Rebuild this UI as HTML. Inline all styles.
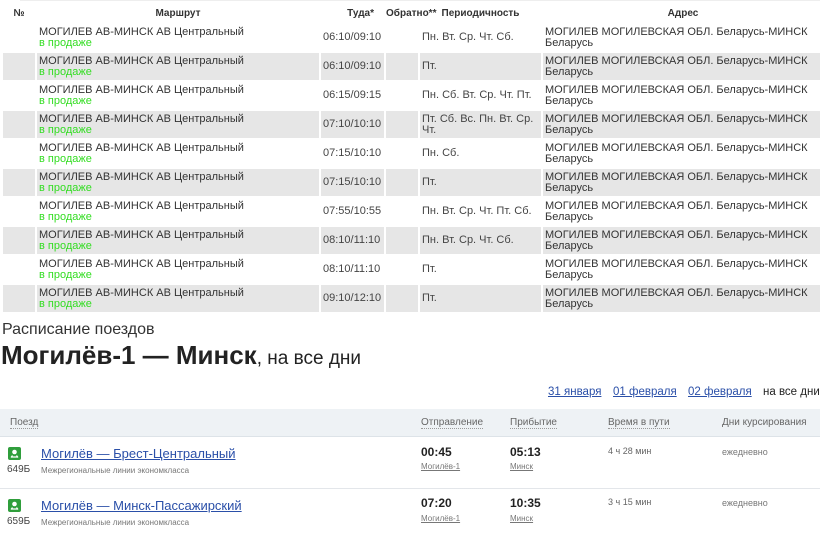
<!DOCTYPE html>
<html><head><meta charset="utf-8"><style>
*{margin:0;padding:0;box-sizing:border-box}
body{width:820px;height:537px;overflow:hidden;background:#fff;font-family:"Liberation Sans",Arial,sans-serif;position:relative}
.a{position:absolute}
table.t{position:absolute;left:1px;top:2px;border-collapse:separate;border-spacing:2px;font-size:11px;color:#444;width:820px;table-layout:fixed}
table.t th{font-size:10px;font-weight:bold;color:#333;height:18px;text-align:center;white-space:nowrap;overflow:visible}
table.t td{height:27px;vertical-align:middle;line-height:11px;padding-left:2px}
table.t tr.g td{background:#e6e6e6}
.g1{color:#33dd22}
.r{color:#333}
.lnk{color:#2a4fa8;text-decoration:underline}
.sm{font-size:11px;color:#666}
</style></head><body>
<div class="a" style="left:20px;top:0;width:800px;height:2px;border-top:1px solid #eee"></div>
<table class="t">
<colgroup><col style="width:32px"><col style="width:282px"><col style="width:63px"><col style="width:32px"><col style="width:121px"><col style="width:280px"></colgroup>
<tr><th>№</th><th>Маршрут</th><th style="text-align:right;padding-right:10px">Туда*</th><th>Обратно**</th><th>Периодичность</th><th>Адрес</th></tr>
<tr><td></td><td class="r">МОГИЛЕВ АВ-МИНСК АВ Центральный<br><span class="g1">в продаже</span></td><td>06:10/09:10</td><td></td><td>Пн. Вт. Ср. Чт. Сб.</td><td class="r">МОГИЛЕВ МОГИЛЕВСКАЯ ОБЛ. Беларусь-МИНСК Беларусь</td></tr>
<tr class="g"><td></td><td class="r">МОГИЛЕВ АВ-МИНСК АВ Центральный<br><span class="g1">в продаже</span></td><td>06:10/09:10</td><td></td><td>Пт.</td><td class="r">МОГИЛЕВ МОГИЛЕВСКАЯ ОБЛ. Беларусь-МИНСК Беларусь</td></tr>
<tr><td></td><td class="r">МОГИЛЕВ АВ-МИНСК АВ Центральный<br><span class="g1">в продаже</span></td><td>06:15/09:15</td><td></td><td>Пн. Сб. Вт. Ср. Чт. Пт.</td><td class="r">МОГИЛЕВ МОГИЛЕВСКАЯ ОБЛ. Беларусь-МИНСК Беларусь</td></tr>
<tr class="g"><td></td><td class="r">МОГИЛЕВ АВ-МИНСК АВ Центральный<br><span class="g1">в продаже</span></td><td>07:10/10:10</td><td></td><td>Пт. Сб. Вс. Пн. Вт. Ср. Чт.</td><td class="r">МОГИЛЕВ МОГИЛЕВСКАЯ ОБЛ. Беларусь-МИНСК Беларусь</td></tr>
<tr><td></td><td class="r">МОГИЛЕВ АВ-МИНСК АВ Центральный<br><span class="g1">в продаже</span></td><td>07:15/10:10</td><td></td><td>Пн. Сб.</td><td class="r">МОГИЛЕВ МОГИЛЕВСКАЯ ОБЛ. Беларусь-МИНСК Беларусь</td></tr>
<tr class="g"><td></td><td class="r">МОГИЛЕВ АВ-МИНСК АВ Центральный<br><span class="g1">в продаже</span></td><td>07:15/10:10</td><td></td><td>Пт.</td><td class="r">МОГИЛЕВ МОГИЛЕВСКАЯ ОБЛ. Беларусь-МИНСК Беларусь</td></tr>
<tr><td></td><td class="r">МОГИЛЕВ АВ-МИНСК АВ Центральный<br><span class="g1">в продаже</span></td><td>07:55/10:55</td><td></td><td>Пн. Вт. Ср. Чт. Пт. Сб.</td><td class="r">МОГИЛЕВ МОГИЛЕВСКАЯ ОБЛ. Беларусь-МИНСК Беларусь</td></tr>
<tr class="g"><td></td><td class="r">МОГИЛЕВ АВ-МИНСК АВ Центральный<br><span class="g1">в продаже</span></td><td>08:10/11:10</td><td></td><td>Пн. Вт. Ср. Чт. Сб.</td><td class="r">МОГИЛЕВ МОГИЛЕВСКАЯ ОБЛ. Беларусь-МИНСК Беларусь</td></tr>
<tr><td></td><td class="r">МОГИЛЕВ АВ-МИНСК АВ Центральный<br><span class="g1">в продаже</span></td><td>08:10/11:10</td><td></td><td>Пт.</td><td class="r">МОГИЛЕВ МОГИЛЕВСКАЯ ОБЛ. Беларусь-МИНСК Беларусь</td></tr>
<tr class="g"><td></td><td class="r">МОГИЛЕВ АВ-МИНСК АВ Центральный<br><span class="g1">в продаже</span></td><td>09:10/12:10</td><td></td><td>Пт.</td><td class="r">МОГИЛЕВ МОГИЛЕВСКАЯ ОБЛ. Беларусь-МИНСК Беларусь</td></tr>
</table>
<div class="a" style="left:2px;top:321px;font-size:16px;color:#333">Расписание поездов</div>
<div class="a" style="left:1px;top:340px;font-size:26px;color:#222;white-space:nowrap"><b>Могилёв-1 — Минск</b><span style="font-size:19px">, на все дни</span></div>
<div class="a lnk" style="left:548px;top:386px;font-size:11.5px">31 января</div>
<div class="a lnk" style="left:613px;top:386px;font-size:11.5px">01 февраля</div>
<div class="a lnk" style="left:688px;top:386px;font-size:11.5px">02 февраля</div>
<div class="a" style="left:763px;top:386px;font-size:11.5px;color:#222;white-space:nowrap">на все дни</div>
<div class="a" style="left:0;top:409px;width:820px;height:28px;background:#eef2f5;border-bottom:1px solid #dde3e8"></div>
<div class="a sm" style="left:10px;top:417px;font-size:10px;color:#666;border-bottom:1px dotted #999">Поезд</div>
<div class="a sm" style="left:421px;top:417px;font-size:10px;border-bottom:1px dotted #999">Отправление</div>
<div class="a sm" style="left:510px;top:417px;font-size:10px;border-bottom:1px dotted #999">Прибытие</div>
<div class="a sm" style="left:608px;top:417px;font-size:10px;border-bottom:1px dotted #999">Время в пути</div>
<div class="a sm" style="left:722px;top:417px;font-size:10px">Дни курсирования</div>
<div class="a" style="left:0;top:488px;width:820px;height:1px;background:#e3e6ea"></div>
<!-- row 1 -->
<svg class="a" style="left:8px;top:447px" width="13" height="13" viewBox="0 0 13 13"><rect width="13" height="13" rx="2" fill="#2f9e3c"/><circle cx="6.5" cy="5" r="2.3" fill="#fff"/><path d="M3 10h7M4.5 8.5l-1.5 2M8.5 8.5l1.5 2" stroke="#fff" stroke-width="1.2"/></svg>
<div class="a" style="left:7px;top:464px;font-size:10px;color:#444">649Б</div>
<div class="a" style="left:41px;top:446px;font-size:13px;color:#2a4fa8;text-decoration:underline">Могилёв — Брест-Центральный</div>
<div class="a" style="left:41px;top:466px;font-size:8px;color:#777">Межрегиональные линии экономкласса</div>
<div class="a" style="left:421px;top:445px;font-size:12px;font-weight:bold;color:#222">00:45</div>
<div class="a" style="left:421px;top:462px;font-size:8px;color:#777;text-decoration:underline">Могилёв-1</div>
<div class="a" style="left:510px;top:445px;font-size:12px;font-weight:bold;color:#222">05:13</div>
<div class="a" style="left:510px;top:462px;font-size:8px;color:#777;text-decoration:underline">Минск</div>
<div class="a" style="left:608px;top:446px;font-size:9px;color:#666">4 ч 28 мин</div>
<div class="a" style="left:722px;top:447px;font-size:9px;color:#777">ежедневно</div>
<!-- row 2 -->
<svg class="a" style="left:8px;top:499px" width="13" height="13" viewBox="0 0 13 13"><rect width="13" height="13" rx="2" fill="#2f9e3c"/><circle cx="6.5" cy="5" r="2.3" fill="#fff"/><path d="M3 10h7M4.5 8.5l-1.5 2M8.5 8.5l1.5 2" stroke="#fff" stroke-width="1.2"/></svg>
<div class="a" style="left:7px;top:516px;font-size:10px;color:#444">659Б</div>
<div class="a" style="left:41px;top:498px;font-size:13px;color:#2a4fa8;text-decoration:underline">Могилёв — Минск-Пассажирский</div>
<div class="a" style="left:41px;top:518px;font-size:8px;color:#777">Межрегиональные линии экономкласса</div>
<div class="a" style="left:421px;top:496px;font-size:12px;font-weight:bold;color:#222">07:20</div>
<div class="a" style="left:421px;top:514px;font-size:8px;color:#777;text-decoration:underline">Могилёв-1</div>
<div class="a" style="left:510px;top:496px;font-size:12px;font-weight:bold;color:#222">10:35</div>
<div class="a" style="left:510px;top:514px;font-size:8px;color:#777;text-decoration:underline">Минск</div>
<div class="a" style="left:608px;top:497px;font-size:9px;color:#666">3 ч 15 мин</div>
<div class="a" style="left:722px;top:498px;font-size:9px;color:#777">ежедневно</div>
</body></html>
